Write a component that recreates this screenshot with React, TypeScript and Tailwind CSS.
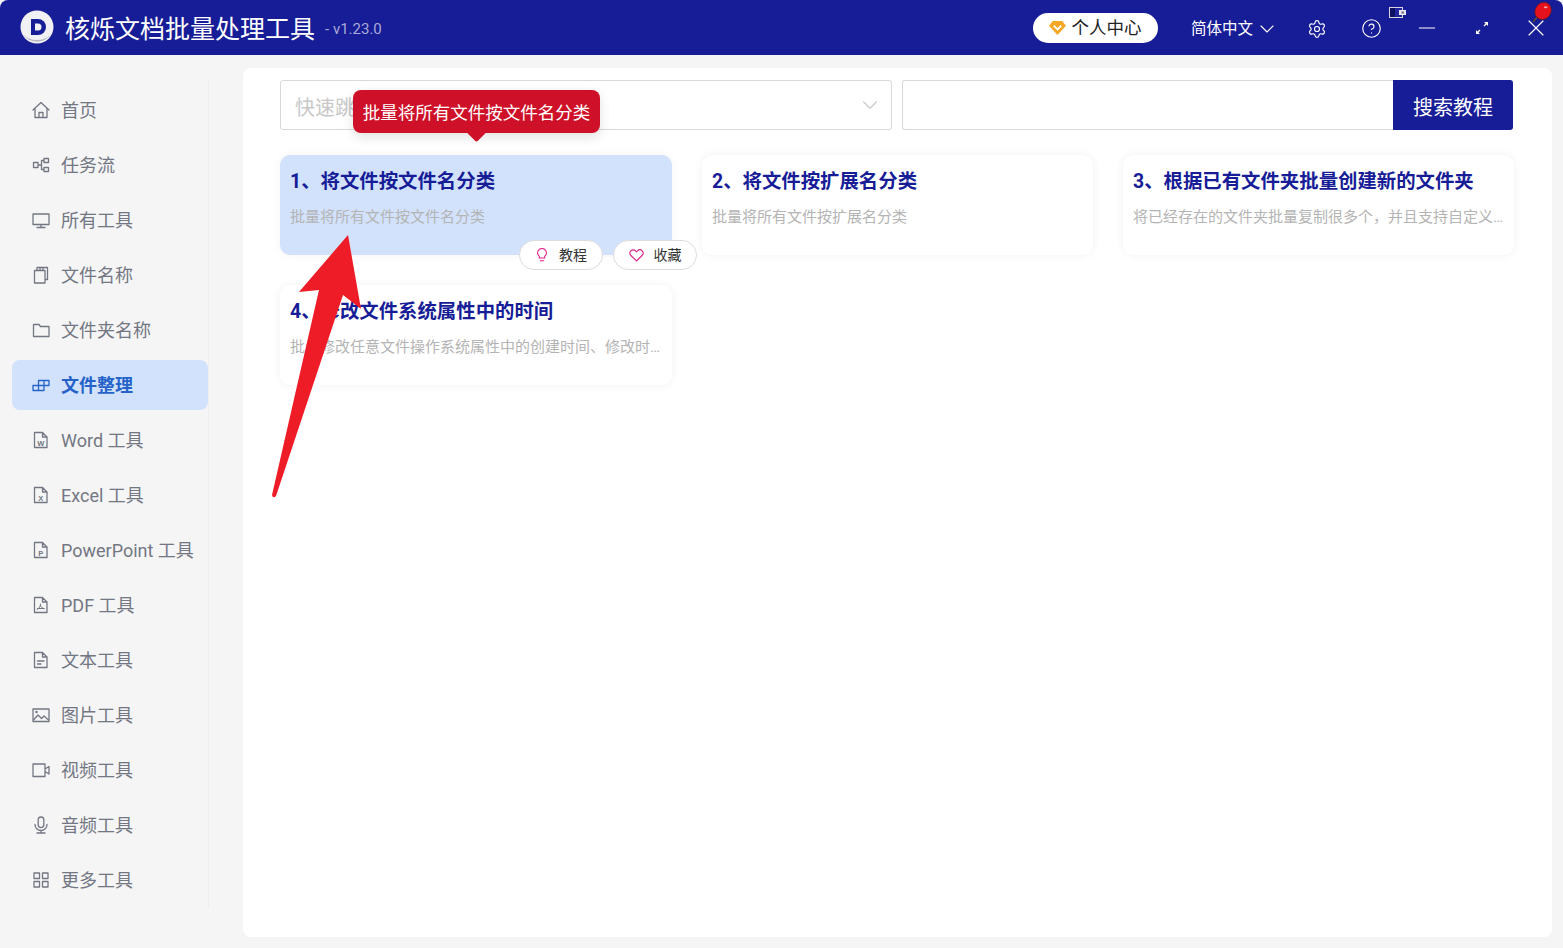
import React from 'react';
import { ChevronDown, Minus, Settings, CircleHelp, X } from 'lucide-react';

const FONT = 'Roboto, "Noto Sans CJK SC", sans-serif';

const Icon: React.FC<{ children: React.ReactNode }> = ({ children }) => (
  <svg viewBox="0 0 18 18" fill="none" stroke="currentColor" strokeWidth="1.3" strokeLinejoin="round" strokeLinecap="round" className="w-[18px] h-[18px] shrink-0">
    {children}
  </svg>
);

const filePath = 'M2.500 1.500h8l4.500 4.500v10.500h-12.500z M10.500 1.500v4.500h4.500';
const FileLetter: React.FC<{ letter: string }> = ({ letter }) => (
  <>
    <path d={filePath} />
    <text x="8.800" y="14.500" fontSize="7.500" fontWeight="700" textAnchor="middle" stroke="none" fill="currentColor" fontFamily="Liberation Sans">{letter}</text>
  </>
);

const navItems: { label: string; icon: React.ReactNode; active?: boolean }[] = [
  { label: '首页', icon: <path d="M1 9L9 1.500 17 9M3 7.500V16.500h12V7.500M7 16.500v-5h4v5" /> },
  { label: '任务流', icon: <path d="M1.500 6.500h4.500v5H1.500zM12 2.500h4.500v4H12zM12 11.500h4.500v4H12zM6 9h3.500V4.500H12M9.500 9v4.500H12" /> },
  { label: '所有工具', icon: <path d="M1 3h16v10.500H1zM9 13.500v3M5 16.500h8" /> },
  { label: '文件名称', icon: <path d="M2.500 4.500h10.500v12.500H2.500zM5 4.500V1.500h10.500v12h-2.500M8 1.500v3h3v-3" /> },
  { label: '文件夹名称', icon: <path d="M1.500 3.500h5.500l1.500 2h8.500v10h-15.500z" /> },
  { label: '文件整理', active: true, icon: <path d="M1 9.500h5.500v5H1zM6.500 9.500H12v5H6.500zM6.500 4.500H17v5H6.500zM12 4.500v5" /> },
  { label: 'Word 工具', icon: <FileLetter letter="W" /> },
  { label: 'Excel 工具', icon: <FileLetter letter="X" /> },
  { label: 'PowerPoint 工具', icon: <FileLetter letter="P" /> },
  { label: 'PDF 工具', icon: <><path d={filePath} /><path d="M8.500 8c.4 2-1.500 4.500-3.500 5.500M8.500 9.500c.6 2 2 3 3.800 3.200M5.500 12.500h6.500" strokeWidth="1" /></> },
  { label: '文本工具', icon: <><path d={filePath} /><path d="M5.500 10h6.500M5.500 13h3.500" /></> },
  { label: '图片工具', icon: <><path d="M1 3h16v12.500H1z" /><path d="M1.500 14l4.500-5 3.500 3.500 2.500-2.500 4.500 4" /><circle cx="4.500" cy="6" r=".6" /></> },
  { label: '视频工具', icon: <path d="M1 3h12v12.500H1zM13 8l4-2.500v7.500l-4-2.500" /> },
  { label: '音频工具', icon: <path d="M6.200 3.800a2.800 2.800 0 0 1 5.600 0v5a2.800 2.800 0 0 1-5.600 0zM3 8.500a6 6 0 0 0 12 0M9 14.500v2.500M5 17h8" /> },
  { label: '更多工具', icon: <path d="M2 2h5.500v5.500H2zM10.500 2H16v5.500h-5.500zM2 10.500h5.500V16H2zM10.500 10.500H16V16h-5.500z" /> },
];

const cards = [
  { title: '1、将文件按文件名分类', desc: '批量将所有文件按文件名分类', hover: true },
  { title: '2、将文件按扩展名分类', desc: '批量将所有文件按扩展名分类' },
  { title: '3、根据已有文件夹批量创建新的文件夹', desc: '将已经存在的文件夹批量复制很多个，并且支持自定义文件夹的名称规则' },
  { title: '4、修改文件系统属性中的时间', desc: '批量修改任意文件操作系统属性中的创建时间、修改时间、访问时间' },
];

const PillButton: React.FC<{ label: string; children: React.ReactNode }> = ({ label, children }) => (
  <button className="w-[84px] h-[30px] flex items-center justify-center gap-[10px] rounded-full bg-white border border-[#dcdcdc] text-[14px] text-[#333]">
    {children}
    <span className="pt-[1px]">{label}</span>
  </button>
);

export default function App() {
  return (
    <div className="relative w-[1563px] h-[948px] overflow-hidden flex flex-col bg-[#f5f5f5]" style={{ fontFamily: FONT }}>
      <header className="h-[55px] shrink-0 flex items-center bg-[#171c97] text-white rounded-tl-[8px] rounded-tr-[8px]">
        <svg viewBox="0 0 34 34" className="w-[34px] h-[34px] ml-[20px] mb-[2px]">
          <circle cx="17" cy="17" r="16.500" fill="#f1f1f3" />
          <path d="M3 24a16.500 16.500 0 0 0 28 0 17 14 0 0 1-28 0z" fill="#b9b9c4" />
          <path d="M11 9h7a8 8 0 0 1 0 16h-7z" fill="#171c97" />
          <path d="M15 13.500h3a3.500 3.500 0 0 1 0 7h-3z" fill="#f1f1f3" />
        </svg>
        <span className="ml-[11px] pt-[4px] text-[25px] leading-none">核烁文档批量处理工具</span>
        <span className="ml-[10px] pt-[4px] text-[15px] text-[#a9abd6]">- v1.23.0</span>
        <div className="flex-1" />
        <button className="w-[125px] h-[30px] flex items-center justify-center gap-[5px] rounded-full bg-white text-[#222] text-[17.500px] leading-none">
          <svg viewBox="0 0 18 16" className="w-[17px] h-[15px]"><path d="M4 1h10l4 5-9 10L0 6z" fill="#f5a623" /><path d="M5 6l4 4 4-4" fill="none" stroke="#fff" strokeWidth="2" /></svg>
          <span className="pt-[3px]">个人中心</span>
        </button>
        <span className="ml-[33px] pt-[4px] text-[15.500px] leading-none">简体中文</span>
        <ChevronDown className="ml-[2px] mr-[10px] mt-[2px] w-[24px] h-[24px]" strokeWidth={1.1} />
        <div className="w-[55px] pt-[2px] flex justify-center"><Settings className="w-[20px] h-[20px]" strokeWidth={1.4} /></div>
        <div className="w-[55px] pt-[2px] flex justify-center"><CircleHelp className="w-[21px] h-[21px]" strokeWidth={1.3} /></div>
        <div className="w-[55px] flex justify-center"><Minus className="w-[26px] h-[26px]" strokeWidth={1.1} /></div>
        <div className="w-[55px] flex justify-center">
          <svg viewBox="0 0 18 18" className="w-[18px] h-[18px]" fill="none" stroke="#fff" strokeWidth="1.300">
            <path d="M11 7l3.500-3.500M7 11l-3.500 3.500" />
            <path d="M11 3h4v4z M3 11v4h4z" fill="#fff" stroke="none" />
          </svg>
        </div>
        <div className="w-[54px] flex justify-center"><X className="w-[28px] h-[28px]" strokeWidth={1} /></div>
      </header>

      <div className="flex-1 flex min-h-0">
        <aside className="w-[209px] shrink-0 mt-[25px] mb-[40px] pt-[5px] pl-[12px] border-r border-[#eeeeee] flex flex-col gap-[5px]">
          {navItems.map((item) => (
            <div
              key={item.label}
              className={
                item.active
                  ? 'h-[50px] flex items-center gap-[11px] pl-[20px] rounded-[8px] bg-[#d2e2fc] text-[#2563c9] font-bold text-[18px]'
                  : 'h-[50px] flex items-center gap-[11px] pl-[20px] text-[#737783] text-[18px]'
              }
            >
              <Icon>{item.icon}</Icon>
              <span className="pt-[1px] whitespace-nowrap">{item.label}</span>
            </div>
          ))}
        </aside>

        <main className="flex-1 ml-[34px] mt-[13px] mb-[11px] mr-[11px] bg-white rounded-[8px] pt-[12px] pl-[37px] pr-[38px]">
          <div className="flex gap-[10px] h-[50px] mr-[1px]">
            <div className="w-[612px] flex items-center justify-between pl-[14px] pr-[8px] border border-[#d9d9d9] rounded-[3px] text-[20px] text-[#c8c8c8]">
              <span className="pt-[6px]">快速跳转</span>
              <ChevronDown className="w-[26px] h-[26px] text-[#c8c8c8]" strokeWidth={1} />
            </div>
            <div className="flex-1 flex">
              <div className="flex-1 border border-[#d9d9d9] border-r-0 rounded-l-[3px]" />
              <button className="w-[120px] pt-[6px] bg-[#171c97] rounded-r-[3px] text-white text-[20px]">搜索教程</button>
            </div>
          </div>

          <div className="mt-[25px] grid grid-cols-[392px_391px_391px] gap-x-[30px] gap-y-[30px]">
            {cards.map((card) => (
              <div
                key={card.title}
                className={
                  card.hover
                    ? 'relative h-[100px] px-[10px] pt-[12px] rounded-[10px] bg-[#d2e2fc] shadow-[0_0_10px_rgba(0,0,0,0.05)]'
                    : 'relative h-[100px] px-[10px] pt-[12px] rounded-[10px] bg-white shadow-[0_0_10px_rgba(0,0,0,0.06)]'
                }
              >
                <div className="text-[19.400px] leading-[30px] font-bold text-[#171c97] whitespace-nowrap">{card.title}</div>
                <div className="mt-[9px] text-[15px] leading-[22px] text-[#b4b4b4] truncate">{card.desc}</div>
                {card.hover && (
                  <>
                    <div className="absolute left-[73px] top-[-65px] w-[247px] h-[43px] pt-[3px] flex items-center justify-center rounded-[8px] bg-[#ce1128] text-white text-[17.500px] whitespace-nowrap shadow-[0_4px_12px_rgba(0,0,0,0.12)]">
                      批量将所有文件按文件名分类
                      <span className="absolute left-[116px] bottom-[-6px] w-[15px] h-[15px] rotate-45 rounded-[2px] bg-[#ce1128] -z-0" />
                    </div>
                    <div className="absolute left-[239px] top-[85px] flex gap-[10px]">
                      <PillButton label="教程">
                        <svg viewBox="0 0 16 18" className="w-[14px] h-[16px]" fill="none" stroke="#e0218a" strokeWidth="1.200"><path d="M8 1.500a5 5 0 0 0-3 9v2h6v-2a5 5 0 0 0-3-9zM5.500 15.500h5" /></svg>
                      </PillButton>
                      <PillButton label="收藏">
                        <svg viewBox="0 0 16 14" className="w-[15px] h-[13px]" fill="none" stroke="#e0218a" strokeWidth="1.200"><path d="M8 12.800L2 7a3.500 3.500 0 0 1 5-5l1 1 1-1a3.500 3.500 0 0 1 5 5z" /></svg>
                      </PillButton>
                    </div>
                  </>
                )}
              </div>
            ))}
          </div>
        </main>
      </div>

      {/* desktop bits sitting over the title bar */}
      <svg viewBox="0 0 17 12" className="absolute left-[1389px] top-[7px] w-[17px] h-[12px]">
        <rect x=".5" y=".5" width="13" height="10" fill="#20259f" stroke="#d6d6dc" />
        <rect x="1" y="1" width="5" height="9" fill="#0d1060" />
        <rect x="10" y="3" width="7" height="5" fill="#e8e8ee" />
        <rect x="12.500" y="4.500" width="2.500" height="2" fill="#6a6a80" />
      </svg>
      <svg viewBox="0 0 20 20" className="absolute left-[1531px] top-[2px] w-[21px] h-[21px]">
        <path d="M2 19l4-5" stroke="#5c4a2c" strokeWidth="1.500" />
        <ellipse cx="11.500" cy="8.500" rx="7.500" ry="8.500" transform="rotate(35 11.500 8.500)" fill="#e5121d" stroke="#5c1a20" strokeWidth=".6" />
        <ellipse cx="14" cy="5" rx="1.800" ry="1" fill="#f7a0a0" />
      </svg>

      {/* annotation arrow */}
      <svg viewBox="0 0 1563 948" className="absolute left-0 top-0 w-[1563px] h-[948px] pointer-events-none">
        <path d="M348 235L361 309 343 295 276 496Q273 499 272 495L319 290 299 292Z" fill="#ee1c27" />
      </svg>
    </div>
  );
}
